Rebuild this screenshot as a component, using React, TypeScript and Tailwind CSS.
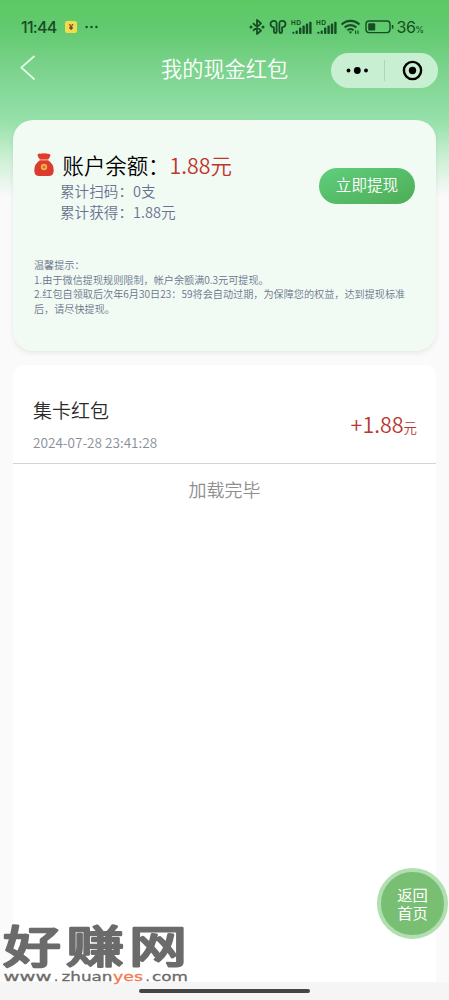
import React from "react";

function Signal() {
  return (
    <svg className="h-[18px] w-[22px]" viewBox="0 0 22 18" fill="#174d24">
      <text x="0" y="5.8" fontSize="6.6" fontWeight="700" fontFamily="Liberation Sans" textLength="10">HD</text>
      <circle cx="2.4" cy="13.8" r="1.1" />
      <rect x="4.6" y="11.6" width="2.2" height="3.4" rx=".8" />
      <rect x="8" y="8.6" width="2.4" height="6.4" rx=".8" />
      <rect x="11.4" y="6.6" width="2.4" height="8.4" rx=".8" />
      <rect x="14.8" y="4.6" width="2.4" height="10.4" rx=".8" />
      <rect x="18.2" y="2.8" width="2.4" height="12.2" rx=".8" />
    </svg>
  );
}

function StatusBar() {
  return (
    <div className="flex h-[53px] items-start pt-[17px] pl-[21px] text-[#174d24]">
      <span className="w-[36px] font-['Inter'] text-[16px] leading-[20px] font-medium tracking-[-0.75px]">11:44</span>
      <div className="mt-[4px] ml-[8px] flex h-[12px] w-[12px] items-center justify-center rounded-[2px] bg-[#f0dc4f] font-['Inter'] text-[8px] leading-none font-bold text-[#804020]">¥</div>
      <svg className="mt-[8px] ml-[8px] h-[4px] w-[14px]" viewBox="0 0 14 4" fill="currentColor">
        <circle cx="1.6" cy="2" r="1.2" /><circle cx="6.5" cy="2" r="1.2" /><circle cx="11.4" cy="2" r="1.2" />
      </svg>
      <div className="ml-[150px] flex items-start">
        <svg className="mt-[1px] h-[18px] w-[16px]" viewBox="0 0 16 18" fill="none" stroke="currentColor" strokeWidth="1.8" strokeLinejoin="round">
          <path d="M4 5.2l8 7.4L8 16V2l4 3.4-8 7.4" />
          <circle cx="2" cy="9" r=".6" /><circle cx="14" cy="9" r=".6" />
        </svg>
        <svg className="mt-[1px] ml-[4px] h-[18px] w-[18px]" viewBox="0 0 18 18" fill="none" stroke="currentColor" strokeWidth="1.8" strokeLinejoin="round">
          <path d="M7.6 5.5C7.6 3.6 6.3 2.8 4.8 2.8 2.7 2.8 1.5 4.3 1.5 6.1S2.8 9.3 4.9 9.3V13.6Q4.9 15 6.2 15T7.6 13.6Z" />
          <path d="M10.4 5.5C10.4 3.6 11.7 2.8 13.2 2.8 15.3 2.8 16.5 4.3 16.5 6.1S15.2 9.3 13.1 9.3V13.6Q13.1 15 11.8 15T10.4 13.6Z" />
        </svg>
        <div className="mt-[2px] ml-[4px] flex gap-[2.5px]"><Signal /><Signal /></div>
        <svg className="mt-[2px] ml-[3px] h-[16px] w-[20px]" viewBox="0 0 20 16" fill="none" stroke="currentColor" strokeWidth="2.1">
          <path d="M.6 5.6a12.6 12.6 0 0 1 17.8 0M3.6 8.6a8.3 8.3 0 0 1 11.800 0M6.4 11.3a4.5 4.5 0 0 1 6.200 0" />
          <path d="M7.6 12.4h3.8L9.5 14.8z" fill="currentColor" stroke="none" />
          <path d="M14.6 11.500v3.500m2.400-3.500v3.500" strokeWidth="1.1" />
        </svg>
        <svg className="mt-[3px] ml-[4px] h-[14px] w-[29px]" viewBox="0 0 29 14" fill="none" stroke="currentColor">
          <rect x="1" y="1" width="24" height="11.6" rx="3" strokeWidth="1.4" />
          <rect x="3.2" y="3.2" width="7" height="7.2" rx="1" fill="currentColor" stroke="none" />
          <path d="M27.600 5v3.600" strokeWidth="1.6" />
        </svg>
        <span className="ml-[3px] font-['Inter'] text-[16px] leading-[20px] font-normal tracking-[-0.5px]">36<span className="text-[9px] tracking-normal">%</span></span>
      </div>
    </div>
  );
}

function NavBar() {
  return (
    <div className="flex h-[67px] items-start">
      <svg className="mt-[1px] ml-[19px] h-[27px] w-[18px]" viewBox="0 0 18 27" fill="none" stroke="#e4fbe8" strokeWidth="1.7"><path d="M15.5 2L2.3 13.5 15.5 25.5" /></svg>
      <h1 className="-mt-px ml-[124px] w-[128px] text-[21.2px] leading-[31px] font-[350] whitespace-nowrap text-white">我的现金红包</h1>
      <div className="ml-[42px] flex h-[35px] w-[107px] items-center rounded-full bg-[#c8efd2]">
        <svg className="h-[35px] w-full" viewBox="0 0 107 35">
          <circle cx="17.5" cy="17.5" r="1.9" /><circle cx="26.3" cy="17.5" r="3.4" /><circle cx="35" cy="17.5" r="1.9" />
          <path d="M53.5 7v21" stroke="#a9d9b4" />
          <circle cx="81.5" cy="17.5" r="8.6" fill="none" stroke="#000" strokeWidth="2.4" /><circle cx="81.5" cy="17.5" r="3.7" />
        </svg>
      </div>
    </div>
  );
}

function MoneyBag() {
  return (
    <svg className="h-[24px] w-[20px]" viewBox="0 0 20 24">
      <path d="M6 7.200Q0 11 .3 17.500q0 5.500 5.200 5.500h9q5.200 0 5.200-5.500Q20 11 14 7.200z" fill="#dc3a2c" />
      <path d="M3.6 1.600Q4.800.2 6.800.8 8.400 0 10 .6q1.600-.8 3.200.2 2-.4 3.200 1 .2 1.800-2.200 4.800H6Q3.400 3.600 3.600 1.600z" fill="#e23b2c" />
      <path d="M5.800 7h8.400" stroke="#ef7460" strokeWidth=".8" />
      <circle cx="10" cy="14" r="3.2" fill="#f3ad48" /><circle cx="10" cy="14" r="1.3" fill="#d9672c" />
    </svg>
  );
}

function BalanceCard() {
  return (
    <section className="mx-[13px] h-[231px] rounded-[20px] bg-[#f1fbf4] pt-[33px] shadow-[0_2px_5px_rgba(0,0,0,0.08)]">
      <div className="flex h-[105px] items-start">
        <div className="ml-[21px]">
          <div className="flex h-[27px] items-start">
            <MoneyBag />
            <p className="-mt-[2px] ml-[8.5px] text-[21.4px] leading-[27px] font-[350] whitespace-nowrap text-black">账户余额：<span className="text-[#c03530]">1.88元</span></p>
          </div>
          <div className="pl-[26px] text-[14.6px] leading-[21px] font-[350] whitespace-nowrap text-[#69738f]">
            <p>累计扫码：0支</p>
            <p>累计获得：1.88元</p>
          </div>
        </div>
        <button className="mt-[15px] mr-[21px] ml-auto h-[36px] w-[96px] rounded-full bg-linear-to-br from-[#5fcf7c] to-[#4eac57] pb-[3px] text-[15.6px] leading-[33px] font-[350] text-white">立即提现</button>
      </div>
      <div className="ml-[21px] w-[380px] text-[10.15px] leading-[14.6px] font-[350] whitespace-nowrap text-[#69738a]">
        <p>温馨提示：</p>
        <p>1.由于微信提现规则限制，帐户余额满0.3元可提现。</p>
        <p>2.红包自领取后次年6月30日23：59将会自动过期，为保障您的权益，达到提现标准</p>
        <p>后，请尽快提现。</p>
      </div>
    </section>
  );
}

function Records() {
  return (
    <section className="mx-[13px] mt-[14px] h-[617px] rounded-t-[10px] bg-white">
      <div className="flex h-[99px] items-start justify-between border-b border-[#d4d5d7] pr-[19px] pl-[20px]">
        <div className="pt-[31px]">
          <p className="text-[19px] leading-[28px] font-[350] text-[#2b2b2b]">集卡红包</p>
          <p className="mt-[8px] text-[13.6px] leading-[20px] font-[350] text-[#898e98]">2024-07-28 23:41:28</p>
        </div>
        <p className="pt-[43px] text-[21.5px] leading-[32px] font-[350] text-[#b93632]">+1.88<span className="text-[13.4px]">元</span></p>
      </div>
      <p className="pt-[12px] text-center text-[18px] leading-[27px] font-[350] text-[#8e8e8e]">加载完毕</p>
    </section>
  );
}

function Watermark() {
  return (
    <svg className="absolute bottom-[14px] left-0 h-[70px] w-[192px] overflow-visible" viewBox="0 0 192 70" fill="#6b6b6b">
      <text transform="translate(3 46.5) scale(1 .77)" fontSize="58" letterSpacing="5" fontWeight="400" stroke="#6b6b6b" strokeWidth="3.2" strokeLinejoin="round" fontFamily="Noto Sans CJK SC, sans-serif">好赚网</text>
      <g fontFamily="DejaVu Sans" fontSize="13" stroke="#6b6b6b" strokeWidth=".3">
        <text x="3.5" y="64.5" textLength="48" lengthAdjust="spacingAndGlyphs">www</text>
        <text x="54" y="64.5">.</text>
        <text x="61.5" y="64.5" textLength="51" lengthAdjust="spacingAndGlyphs">zhuan</text>
        <text x="113" y="64.5" textLength="30" lengthAdjust="spacingAndGlyphs" fill="#f4794f" stroke="#f4794f">yes</text>
        <text x="145.5" y="64.5">.</text>
        <text x="152" y="64.5" textLength="36" lengthAdjust="spacingAndGlyphs">com</text>
      </g>
    </svg>
  );
}

export default function App() {
  return (
    <main className="relative h-[1000px] w-full overflow-hidden bg-[#fafafa] bg-[linear-gradient(180deg,#5bc864_0px,#62ca70_30px,#79d289_65px,#8cdca1_105px,#9be2ae_125px,#c8efd1_155px,#fafafa_197px)] font-['Noto_Sans_CJK_SC',sans-serif]">
      <StatusBar />
      <NavBar />
      <BalanceCard />
      <Records />
      <footer className="flex h-[18px] justify-center bg-[#f5f5f5] pt-[7px]">
        <div className="h-[4px] w-[171px] rounded-full bg-[#454545]" />
      </footer>
      <button className="absolute top-[868px] left-[377px] flex h-[71px] w-[71px] flex-col items-center justify-center rounded-full border-[4px] border-[#b0dfb0] bg-[#78be73] pb-[1px] text-[15.3px] leading-[18px] font-normal text-white">
        <span>返回</span><span>首页</span>
      </button>
      <Watermark />
    </main>
  );
}
